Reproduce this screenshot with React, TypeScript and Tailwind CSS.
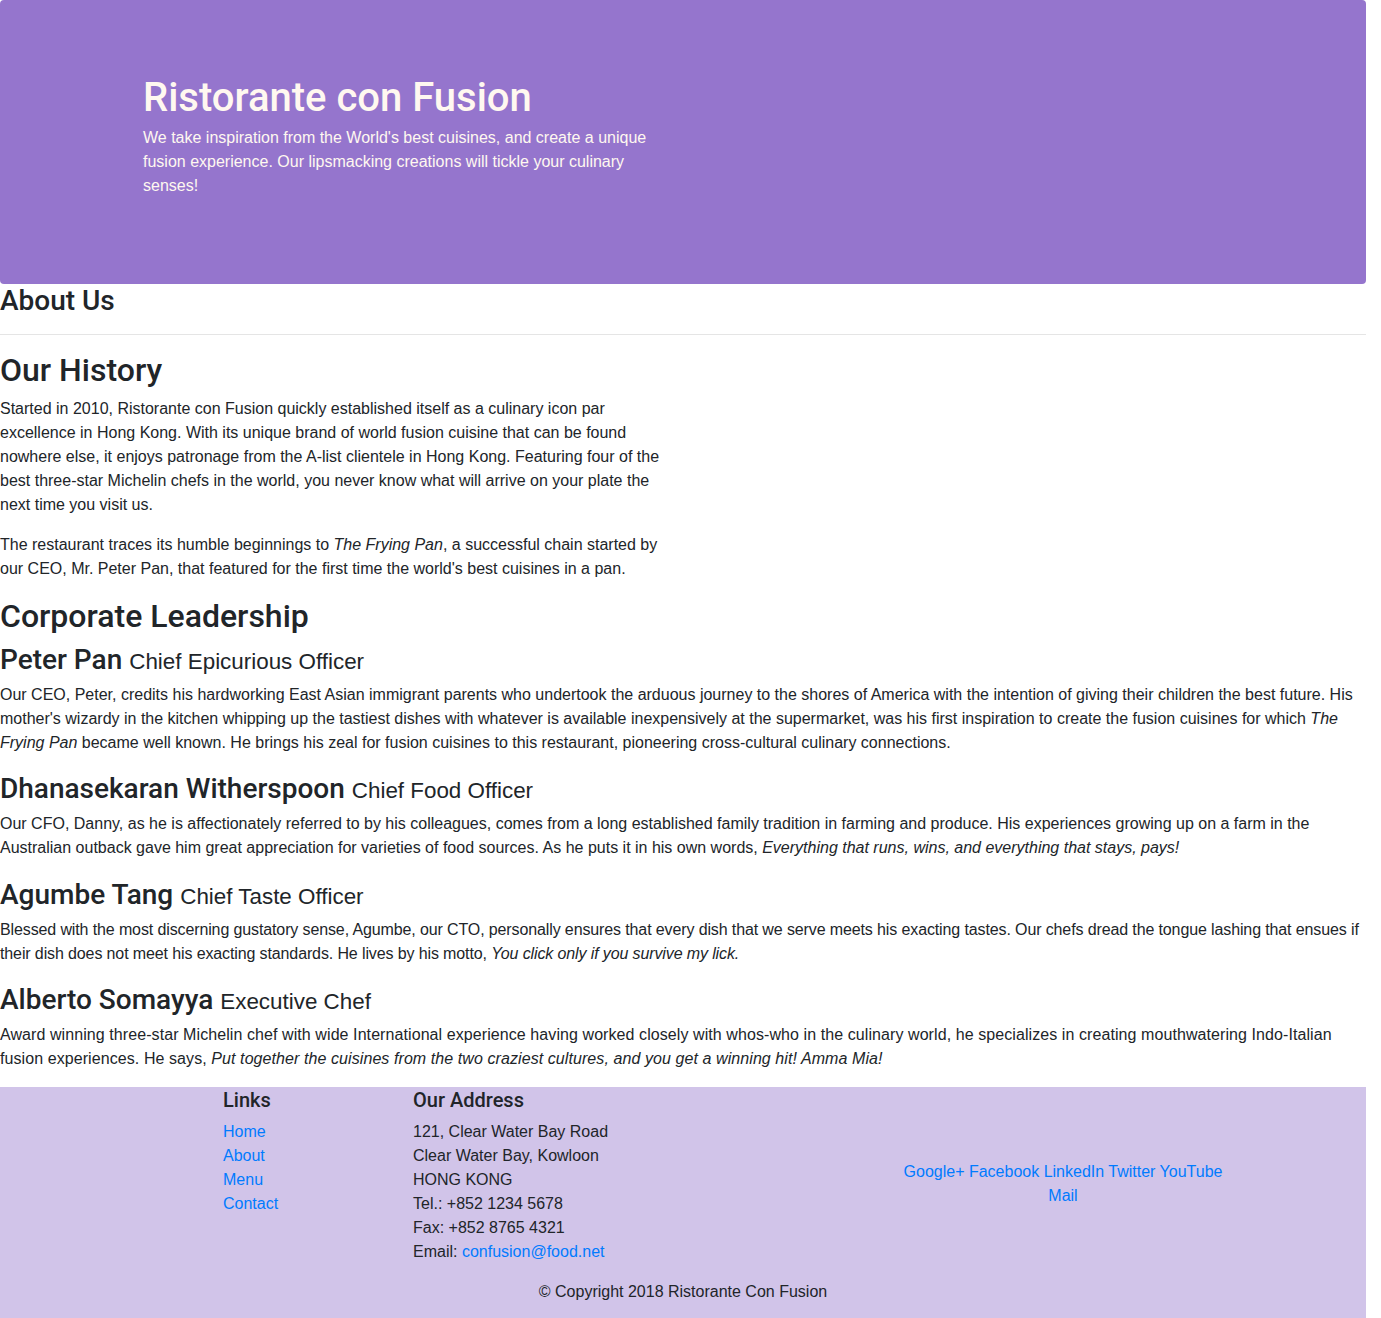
import React from "react";

type Leader = {
  name: string;
  title: string;
  spacing: string;
  body: React.ReactNode;
};

const leaders: Leader[] = [
  {
    name: "Peter Pan",
    title: "Chief Epicurious Officer",
    spacing: "",
    body: (
      <>
        Our CEO, Peter, credits his hardworking East Asian immigrant parents who undertook the arduous journey to the
        shores of America with the intention of giving their children the best future. His mother's wizardy in the
        kitchen whipping up the tastiest dishes with whatever is available inexpensively at the supermarket, was his
        first inspiration to create the fusion cuisines for which <em>The Frying Pan</em> became well known. He brings
        his zeal for fusion cuisines to this restaurant, pioneering cross-cultural culinary connections.
      </>
    ),
  },
  {
    name: "Dhanasekaran Witherspoon",
    title: "Chief Food Officer",
    spacing: "",
    body: (
      <>
        Our CFO, Danny, as he is affectionately referred to by his colleagues, comes from a long established family
        tradition in farming and produce. His experiences growing up on a farm in the Australian outback gave him great
        appreciation for varieties of food sources. As he puts it in his own words,{" "}
        <em>Everything that runs, wins, and everything that stays, pays!</em>
      </>
    ),
  },
  {
    name: "Agumbe Tang",
    title: "Chief Taste Officer",
    spacing: "tracking-[-0.12px]",
    body: (
      <>
        Blessed with the most discerning gustatory sense, Agumbe, our CTO, personally ensures that every dish that we
        serve meets his exacting tastes. Our chefs dread the tongue lashing that ensues if their dish does not meet his
        exacting standards. He lives by his motto, <em>You click only if you survive my lick.</em>
      </>
    ),
  },
  {
    name: "Alberto Somayya",
    title: "Executive Chef",
    spacing: "tracking-[0.08px]",
    body: (
      <>
        Award winning three-star Michelin chef with wide International experience having worked closely with whos-who in
        the culinary world, he specializes in creating mouthwatering Indo-Italian fusion experiences. He says,{" "}
        <em>Put together the cuisines from the two craziest cultures, and you get a winning hit! Amma Mia!</em>
      </>
    ),
  },
];

const socials = ["Google+", "Facebook", "LinkedIn", "Twitter", "YouTube", "Mail"];

const headFont = "font-['Roboto','Liberation_Sans',Arial,sans-serif] font-medium";

export default function App() {
  return (
    <div className="w-[1366px] bg-white font-['Liberation_Sans',Arial,sans-serif] text-[16px] leading-6 text-[#212529]">
      <header className="h-[284px] rounded-[4px] bg-[#9575cd] pl-[143px] pt-[74px] text-[#fff8f0]">
        <div className="w-[540px]">
          <h1 className={`${headFont} text-[40px] leading-[48px]`}>Ristorante con Fusion</h1>
          <p className="mt-1 text-[16px] leading-6">
            We take inspiration from the World's best cuisines, and create a unique fusion experience. Our lipsmacking
            creations will tickle your culinary senses!
          </p>
        </div>
      </header>

      <main>
        <h3 className={`${headFont} mb-2 text-[28px] leading-[33.6px]`}>About Us</h3>
        <hr className="my-4 border-t border-black/10" />

        <section className="w-[683px]">
          <h2 className={`${headFont} mb-2 text-[32px] leading-[38.4px]`}>Our History</h2>
          <p className="mb-4">
            Started in 2010, Ristorante con Fusion quickly established itself as a culinary icon par excellence in Hong
            Kong. With its unique brand of world fusion cuisine that can be found nowhere else, it enjoys patronage from
            the A-list clientele in Hong Kong. Featuring four of the best three-star Michelin chefs in the world, you
            never know what will arrive on your plate the next time you visit us.
          </p>
          <p className="mb-4">
            The restaurant traces its humble beginnings to <em>The Frying Pan</em>, a successful chain started by our
            CEO, Mr. Peter Pan, that featured for the first time the world's best cuisines in a pan.
          </p>
        </section>

        <section>
          <h2 className={`${headFont} mb-[6px] text-[32px] leading-[38.4px]`}>Corporate Leadership</h2>
          {leaders.map((l) => (
            <div key={l.name} className="pt-[4.5px]">
              <h3 className={`${headFont} mb-[9px] h-[28px] text-[28px] leading-[28px]`}>
                {l.name}{" "}
                <small className="font-['Liberation_Sans',Arial,sans-serif] text-[22.4px] leading-none font-normal">
                  {l.title}
                </small>
              </h3>
              <p className={`mb-4 ${l.spacing}`}>{l.body}</p>
            </div>
          ))}
        </section>
      </main>

      <footer className="bg-[#d1c4e9] pt-px pb-3">
        <div className="mx-auto flex w-[1140px]">
          <div className="ml-[95px] w-[190px] px-[15px]">
            <h5 className={`${headFont} mb-2 text-[20px] leading-6`}>Links</h5>
            <ul className="mb-4">
              {["Home", "About", "Menu", "Contact"].map((x) => (
                <li key={x}>
                  <a href="#" className="text-[#007bff]">
                    {x}
                  </a>
                </li>
              ))}
            </ul>
          </div>
          <div className="w-[475px] px-[15px]">
            <h5 className={`${headFont} mb-2 text-[20px] leading-6`}>Our Address</h5>
            <address className="mb-4 not-italic">
              121, Clear Water Bay Road
              <br />
              Clear Water Bay, Kowloon
              <br />
              HONG KONG
              <br />
              Tel.: +852 1234 5678
              <br />
              Fax: +852 8765 4321
              <br />
              Email:{" "}
              <a href="mailto:confusion@food.net" className="text-[#007bff]">
                confusion@food.net
              </a>
            </address>
          </div>
          <div className="flex w-[380px] items-center justify-center px-[15px]">
            <div className="w-[330px] text-center">
              {socials.map((s, i) => (
                <React.Fragment key={s}>
                  <a href="#" className="text-[#007bff]">
                    {s}
                  </a>
                  {i < socials.length - 1 ? " " : ""}
                </React.Fragment>
              ))}
            </div>
          </div>
        </div>
        <div className="flex justify-center">
          <p className="mb-4">© Copyright 2018 Ristorante Con Fusion</p>
        </div>
      </footer>
    </div>
  );
}
